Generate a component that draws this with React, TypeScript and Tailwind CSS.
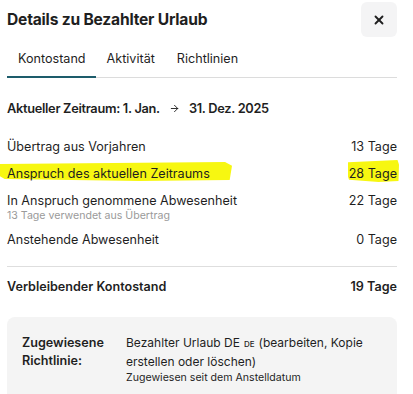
import { X, ArrowRight } from "lucide-react";

const rows = [
  { label: "Übertrag aus Vorjahren", value: "13 Tage" },
  { label: "Anspruch des aktuellen Zeitraums", value: "28 Tage", marked: true },
  { label: "In Anspruch genommene Abwesenheit", value: "22 Tage", note: "13 Tage verwendet aus Übertrag" },
  { label: "Anstehende Abwesenheit", value: "0 Tage" },
];

function Marker({ className }: { className: string }) {
  // highlighter stroke drawn over the screenshot
  return (
    <svg className={`pointer-events-none absolute ${className}`} viewBox="0 0 100 20" preserveAspectRatio="none">
      <path d="M0 2 L97 0 L100 4 L99 19 L60 20 L2 18 L0 15 Z" fill="#f7f711" />
    </svg>
  );
}

export default function App() {
  return (
    <div className="w-[413px] h-[394px] overflow-hidden bg-white px-[7px] text-[#1f1f1f] font-['Inter','Noto_Sans',sans-serif]">
      <div className="flex items-center justify-between pt-[2px]">
        <h1 className="text-[15.6px] font-bold tracking-[-0.2px]">Details zu Bezahlter Urlaub</h1>
        <button className="flex h-[35px] w-[36px] items-center justify-center rounded-md bg-[#f4f4f5] mr-[9px]">
          <X className="h-[14px] w-[14px]" strokeWidth={3.2} />
        </button>
      </div>

      <div className="mt-[13px] mr-[9px] flex border-b border-[#dcdcdc] text-[12.6px]">
        <div className="border-b-2 border-[#1d5c6b] pl-[11px] pr-[10px] pb-[7px] -mb-px">Kontostand</div>
        <div className="px-[11px] pb-[7px]">Aktivität</div>
        <div className="px-[11px] pb-[7px]">Richtlinien</div>
      </div>

      <div className="mt-[21px] flex items-center text-[12.8px] font-semibold tracking-[-0.3px]">
        <span>Aktueller Zeitraum: 1. Jan.</span>
        <ArrowRight className="mx-[9px] h-[11px] w-[11px]" strokeWidth={2} />
        <span>31. Dez. 2025</span>
      </div>

      <div className="mr-[9px] mt-[16px] flex flex-col text-[12.6px]">
        {rows.map((r) => (
          <div key={r.label} className="relative flex justify-between py-[3px] leading-[19px] min-h-[25px]">
            {r.marked && (
              <>
                <Marker className="-left-[7px] top-[1px] h-[19px] w-[232px]" />
                <Marker className="left-[341px] -top-[1px] h-[22px] w-[51px]" />
              </>
            )}
            <div className="relative mb-[2px]">
              <div>{r.label}</div>
              {r.note && <div className="text-[10.6px] leading-[12px] text-[#9a9a9a]">{r.note}</div>}
            </div>
            <div className="relative">{r.value}</div>
          </div>
        ))}
      </div>

      <div className="mr-[9px] mt-[12px] border-t border-[#dedede] pt-[11px] flex justify-between text-[12.6px] font-semibold">
        <span>Verbleibender Kontostand</span>
        <span>19 Tage</span>
      </div>

      <div className="mr-[9px] mt-[20px] flex rounded-lg bg-[#f4f4f4] px-[15px] pt-[17px] pb-[20px]">
        <div className="w-[104px] text-[12.6px] font-semibold leading-[18px]">Zugewiesene Richtlinie:</div>
        <div className="flex-1 text-[12px] leading-[17px]">
          <div className="flex items-baseline gap-[4px] whitespace-nowrap">
            <span>Bezahlter Urlaub DE</span>
            <span className="text-[8px] font-medium">DE</span>
            <span>(bearbeiten, Kopie</span>
          </div>
          <div>erstellen oder löschen)</div>
          <div className="text-[10.6px] leading-[15px]">Zugewiesen seit dem Anstelldatum</div>
        </div>
      </div>
    </div>
  );
}
